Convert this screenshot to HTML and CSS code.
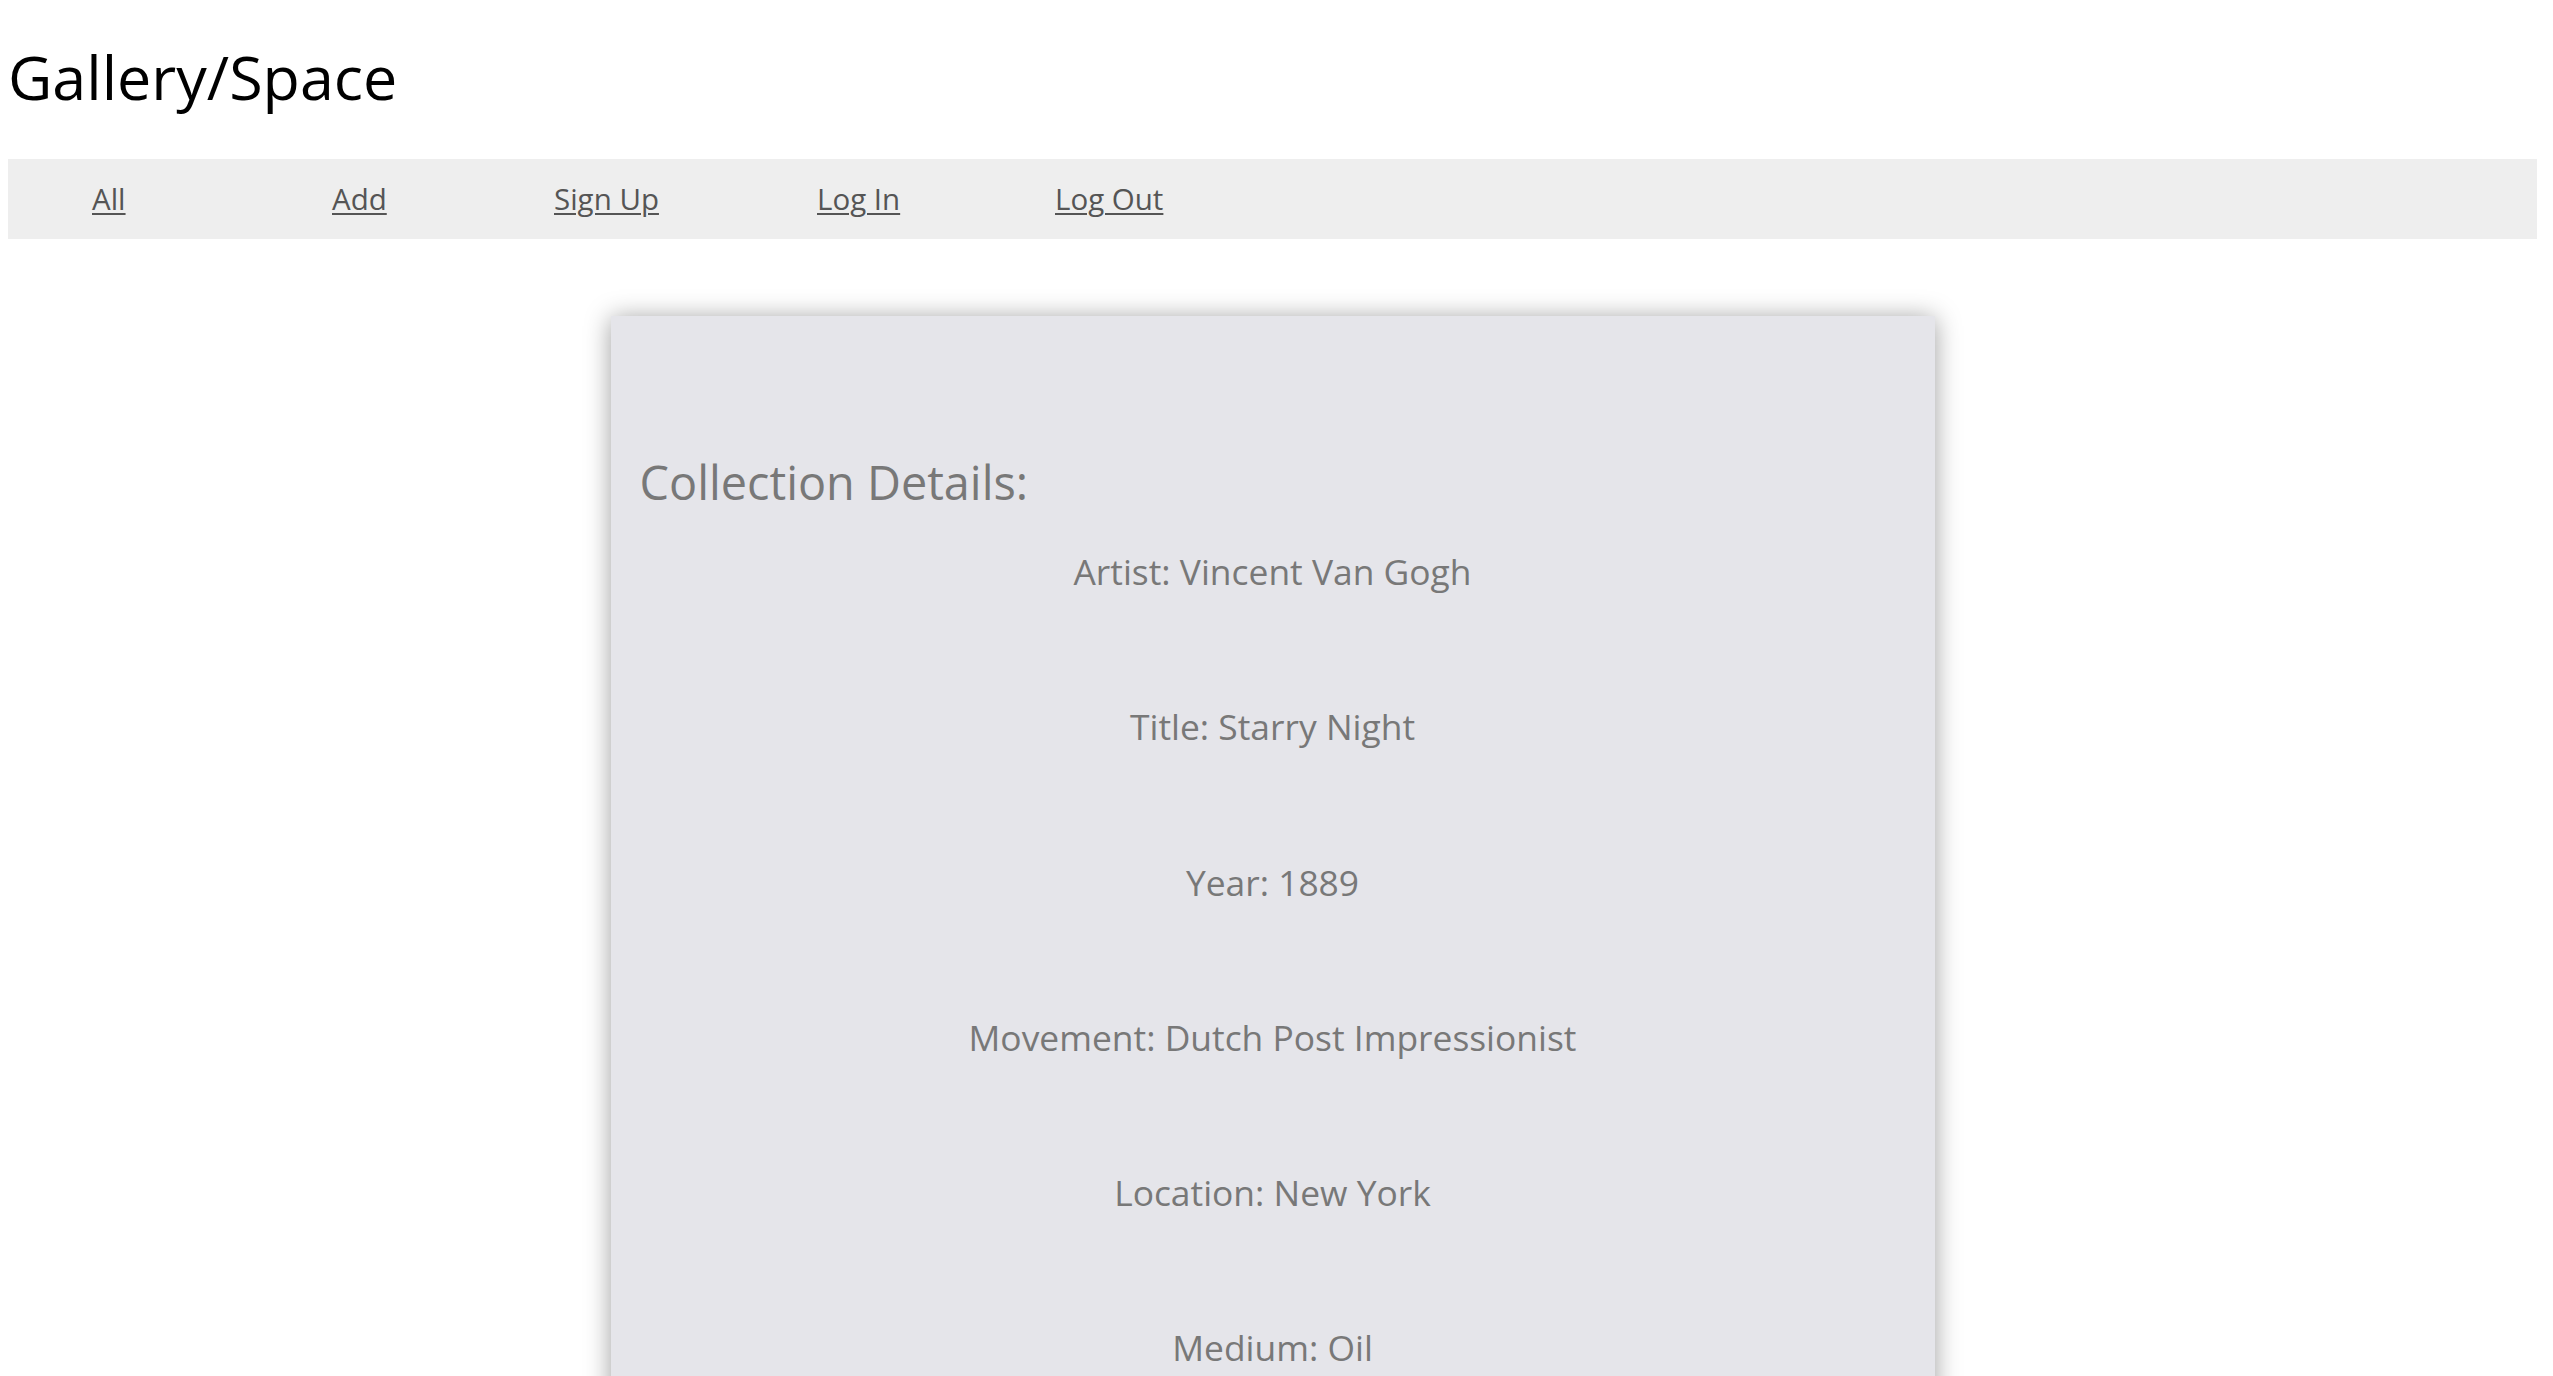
FILE: index.html
```html
<!DOCTYPE html>
<html lang="en">
<head>
<meta charset="utf-8">
<title>Gallery/Space</title>
<link rel="stylesheet" href="styles.css">
</head>
<body>
<header class="site-header">
  <h1 class="site-title">Gallery/Space</h1>
  <nav class="main-nav">
    <a class="nav-link" href="#">All</a>
    <a class="nav-link" href="#">Add</a>
    <a class="nav-link" href="#">Sign Up</a>
    <a class="nav-link" href="#">Log In</a>
    <a class="nav-link" href="#">Log Out</a>
  </nav>
</header>
<main class="content">
  <section class="card">
    <h2 class="card-title">Collection Details:</h2>
    <p class="detail">Artist: Vincent Van Gogh</p>
    <p class="detail">Title: Starry Night</p>
    <p class="detail">Year: 1889</p>
    <p class="detail">Movement: Dutch Post Impressionist</p>
    <p class="detail">Location: New York</p>
    <p class="detail">Medium: Oil</p>
  </section>
</main>
</body>
</html>
```
FILE: styles.css
```css
html, body {
  background: #ffffff;
}
body {
  margin: 8px 16px 8px 8px;
  font-family: "Open Sans", "Noto Sans", sans-serif;
  color: #000;
}
.site-title {
  margin: 29px 0 42px;
  font-size: 61px;
  line-height: 80px;
  font-weight: 400;
  color: #000;
}
.main-nav {
  display: grid;
  grid-template-columns: 240px 222px 263px 238px auto;
  height: 80px;
  padding-left: 84px;
  background: #eeeeee;
}
.nav-link {
  justify-self: start;
  font-size: 29.5px;
  line-height: 80px;
  color: #555555;
  text-decoration: underline;
  text-decoration-thickness: 2px;
  text-underline-offset: 3px;
}
.content {
  display: flex;
  justify-content: center;
  padding-top: 77px;
}
.card {
  width: 1324px;
  box-sizing: border-box;
  padding: 136px 29px 120px;
  background: #e5e5ea;
  box-shadow: 0 2px 24px rgba(0, 0, 0, 0.38);
  color: #787878;
}
.card-title {
  margin: 0 0 34px;
  font-size: 46.8px;
  line-height: 60px;
  font-weight: 400;
}
.detail {
  margin: 0 0 105.3px;
  font-size: 35.4px;
  line-height: 50px;
  text-align: center;
}
```
